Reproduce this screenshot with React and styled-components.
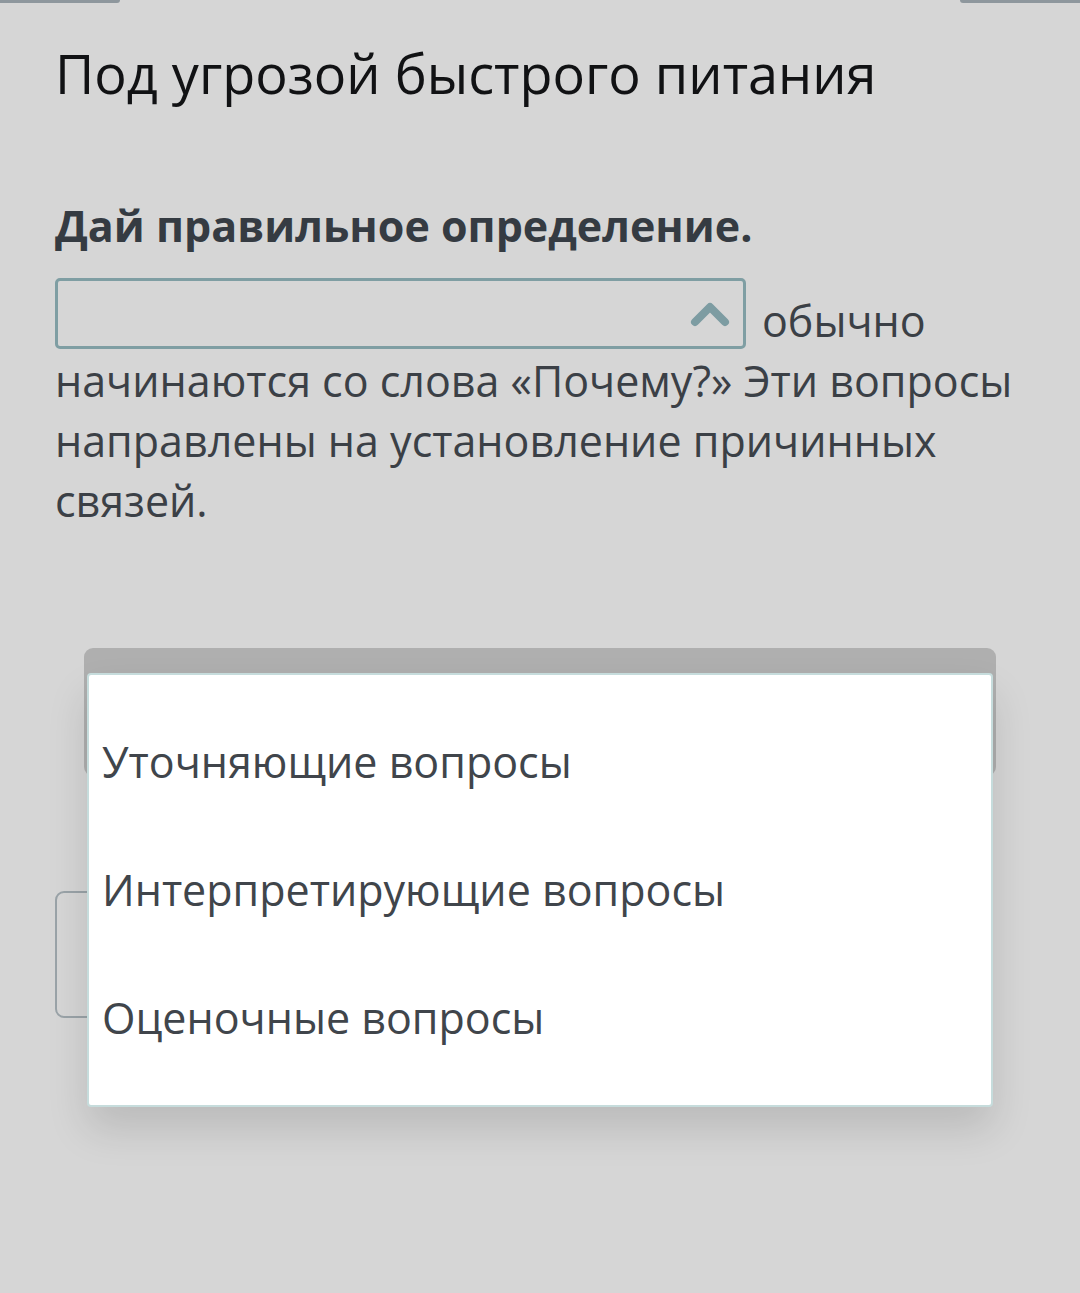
import React from 'react'
import styled, { createGlobalStyle } from 'styled-components'

const GlobalStyle = createGlobalStyle`
  html, body {
    margin: 0;
    padding: 0;
    background: #d6d6d6;
  }
  body {
    font-family: "Open Sans", "Noto Sans", sans-serif;
  }
`

const Page = styled.div`
  position: relative;
  width: 1080px;
  height: 1293px;
  overflow: hidden;
  background: #d6d6d6;
`

const TopEdge = styled.div`
  display: flex;
  justify-content: space-between;
  height: 3px;
`

const EdgeTab = styled.div`
  width: 120px;
  height: 3px;
  background: #8e979d;
  border-radius: ${(p) => (p.right ? '0 0 0 6px' : '0 0 6px 0')};
`

const Content = styled.div`
  padding: 0 55px;
`

const Title = styled.h1`
  margin: 35px 0 0;
  font-size: 54px;
  font-weight: 400;
  line-height: 70px;
  color: #111214;
`

const Question = styled.h2`
  margin: 90px 0 0;
  font-size: 43px;
  font-weight: 700;
  line-height: 56px;
  color: #353b42;
`

const Sentence = styled.p`
  margin: 24px 0 0;
  font-size: 43px;
  line-height: 60px;
  color: #3b4046;
`

const SelectBox = styled.span`
  position: relative;
  display: inline-block;
  box-sizing: border-box;
  width: 691px;
  height: 71px;
  margin-right: 16px;
  vertical-align: -12px;
  border: 3px solid #7f9ea3;
  border-radius: 5px;
`

const ChevronWrap = styled.span`
  position: absolute;
  right: 13px;
  top: 50%;
  display: flex;
  transform: translateY(-50%);
`

const HiddenSelect = styled.div`
  box-sizing: border-box;
  width: 930px;
  height: 127px;
  margin-top: 360px;
  border: 2px solid #9aa3a8;
  border-radius: 9px;
`

const PopupBack = styled.div`
  position: absolute;
  left: 84px;
  top: 648px;
  width: 912px;
  height: 128px;
  background: #afafaf;
  border-radius: 9px;
`

const PopupList = styled.ul`
  position: absolute;
  left: 87px;
  top: 673px;
  width: 906px;
  box-sizing: border-box;
  margin: 0;
  padding: 22px 0 24px;
  list-style: none;
  background: #ffffff;
  border: 2px solid #c6dcdc;
  border-radius: 4px;
  box-shadow: 0 22px 40px rgba(0, 0, 0, 0.13);
`

const Option = styled.li`
  display: flex;
  align-items: center;
  height: 128px;
  padding-left: 13px;
  font-size: 43px;
  color: #40454b;
`

function Chevron() {
  return (
    <svg width="40" height="26" viewBox="0 0 40 26">
      <path
        d="M5 21 L20 6 L35 21"
        fill="none"
        stroke="#7d9ca2"
        strokeWidth="8"
        strokeLinecap="round"
        strokeLinejoin="round"
      />
    </svg>
  )
}

const options = ['Уточняющие вопросы', 'Интерпретирующие вопросы', 'Оценочные вопросы']

export default function App() {
  return (
    <>
      <GlobalStyle />
      <Page>
        <TopEdge>
          <EdgeTab />
          <EdgeTab right />
        </TopEdge>
        <Content>
          <Title>Под угрозой быстрого питания</Title>
          <Question>Дай правильное определение.</Question>
          <Sentence>
            <SelectBox>
              <ChevronWrap>
                <Chevron />
              </ChevronWrap>
            </SelectBox>
            обычно начинаются со слова «Почему?» Эти вопросы направлены на установление причинных связей.
          </Sentence>
          <HiddenSelect />
        </Content>
        <PopupBack />
        <PopupList>
          {options.map((o) => (
            <Option key={o}>{o}</Option>
          ))}
        </PopupList>
      </Page>
    </>
  )
}
